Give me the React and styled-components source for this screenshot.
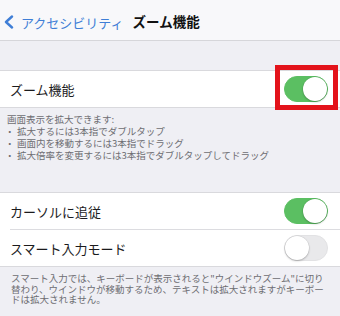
import styled, { createGlobalStyle } from "styled-components";

const GlobalStyle = createGlobalStyle`
  html, body {
    margin: 0;
    padding: 0;
    background: #efeff4;
  }
  body {
    font-family: "Noto Sans CJK JP", "Noto Sans", sans-serif;
    -webkit-font-smoothing: antialiased;
  }
`;

const Screen = styled.div`
  width: 340px;
  height: 316px;
  overflow: hidden;
  background: #efeff4;
`;

const NavBar = styled.div`
  height: 40px;
  background: #f8f8fa;
  border-bottom: 1px solid #d6d6da;
  display: flex;
  align-items: center;
  padding: 4px 0 0 4px;
  box-sizing: border-box;
  height: 41px;
`;

const BackLink = styled.div`
  display: flex;
  align-items: center;
  gap: 7px;
  color: #3f7ed6;
  font-size: 13px;
  line-height: 1;
  margin-right: 9px;

  svg {
    display: block;
  }
`;

const Title = styled.div`
  font-size: 13.5px;
  font-weight: 700;
  color: #111;
  line-height: 1;
`;

const Spacer = styled.div`
  height: ${(p) => p.$h}px;
`;

const Group = styled.div`
  background: #fff;
  border-top: 1px solid #d9d9dd;
  border-bottom: 1px solid #d9d9dd;
`;

const Row = styled.div`
  height: 36px;
  display: flex;
  align-items: center;
  justify-content: space-between;
  padding: 0 12px 0 10px;
  position: relative;

  & + & {
    border-top: 1px solid #dcdce0;
    margin-left: 10px;
    padding-left: 0;
  }
`;

const Label = styled.span`
  font-size: 13px;
  color: #1b1b1d;
  line-height: 1;
`;

const ToggleWrap = styled.span`
  position: relative;
  display: block;
`;

const Track = styled.span`
  display: block;
  width: 44px;
  height: 26px;
  border-radius: 13px;
  box-sizing: border-box;
  background: ${(p) => (p.$on ? "#5bbf62" : "#e9e9eb")};
  border: 1px solid ${(p) => (p.$on ? "#5bbf62" : "#e2e2e4")};
  position: relative;
`;

const Knob = styled.span`
  position: absolute;
  top: 0;
  left: ${(p) => (p.$on ? "18px" : "0")};
  width: 24px;
  height: 24px;
  border-radius: 50%;
  background: #fff;
  box-shadow: 0 1px 2px rgba(0, 0, 0, 0.25), 0 0 0 0.5px rgba(0, 0, 0, 0.08);
`;

const Highlight = styled.span`
  position: absolute;
  left: -9px;
  right: -10px;
  top: -11px;
  bottom: -8px;
  border: 5px solid #e3131b;
  pointer-events: none;
`;

const Note = styled.div`
  font-size: 9.5px;
  line-height: ${(p) => p.$lh}px;
  color: #6d6d72;
  padding: ${(p) => p.$pad};
`;

const Bullets = styled.ul`
  list-style: none;
  margin: 0;
  padding: 0;

  li {
    display: flex;
  }

  li::before {
    content: "・";
    display: inline-block;
    width: 12px;
    margin-left: -2px;
  }
`;

const Toggle = ({ on, highlight }) => (
  <ToggleWrap>
    <Track $on={on}>
      <Knob $on={on} />
    </Track>
    {highlight && <Highlight />}
  </ToggleWrap>
);

export default function App() {
  return (
    <Screen>
      <GlobalStyle />
      <NavBar>
        <BackLink>
          <svg width="10" height="14" viewBox="0 0 10 14">
            <polyline
              points="8,1.5 2,7 8,12.5"
              fill="none"
              stroke="#3f7ed6"
              strokeWidth="2.4"
              strokeLinecap="round"
              strokeLinejoin="round"
            />
          </svg>
          <span>アクセシビリティ</span>
        </BackLink>
        <Title>ズーム機能</Title>
      </NavBar>
      <Spacer $h={29} />
      <Group>
        <Row>
          <Label>ズーム機能</Label>
          <Toggle on highlight />
        </Row>
      </Group>
      <Note $lh={12} $pad="5px 0 0 7px">
        <div>画面表示を拡大できます:</div>
        <Bullets>
          <li>拡大するには3本指でダブルタップ</li>
          <li>画面内を移動するには3本指でドラッグ</li>
          <li>拡大倍率を変更するには3本指でダブルタップしてドラッグ</li>
        </Bullets>
      </Note>
      <Spacer $h={31} />
      <Group>
        <Row>
          <Label>カーソルに追従</Label>
          <Toggle on />
        </Row>
        <Row>
          <Label>スマート入力モード</Label>
          <Toggle />
        </Row>
      </Group>
      <Note $lh={10.5} $pad="6px 12px 0 11px">
        スマート入力では、キーボードが表示されると"ウインドウズーム"に切り替わり、ウインドウが移動するため、テキストは拡大されますがキーボードは拡大されません。
      </Note>
    </Screen>
  );
}
